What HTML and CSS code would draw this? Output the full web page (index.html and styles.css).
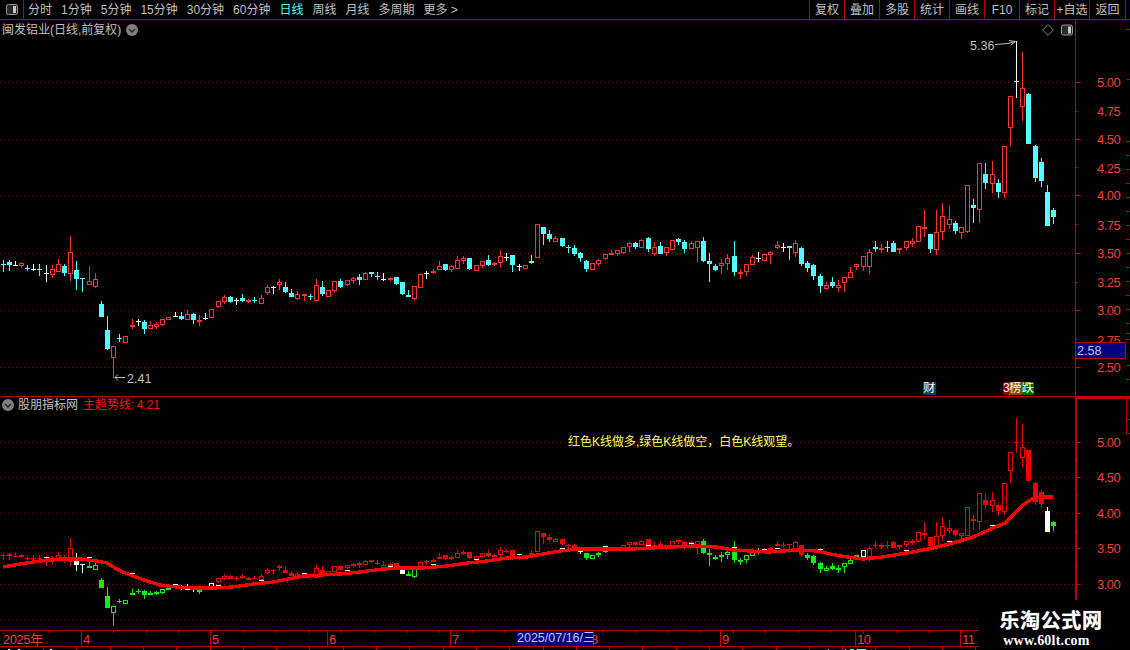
FILE: index.html
```html
<!DOCTYPE html>
<html lang="zh-CN">
<head>
<meta charset="utf-8">
<title>闽发铝业 K线</title>
<link rel="stylesheet" href="styles.css">
</head>
<body>
<div class="app">
  <header class="toolbar">
    <div class="panel-btn">
      <svg class="panel-icon" viewBox="0 0 12 11"><rect x="0.5" y="0.5" width="11" height="10" rx="2" class="pi-frame"/><rect x="7" y="2" width="3" height="7" class="pi-fill"/></svg>
    </div>
    <nav class="periods">
      <span>分时</span><span>1分钟</span><span>5分钟</span><span>15分钟</span><span>30分钟</span><span>60分钟</span><span class="active">日线</span><span>周线</span><span>月线</span><span>多周期</span><span>更多 &gt;</span>
    </nav>
    <nav class="actions">
      <span>复权</span><span>叠加</span><span>多股</span><span>统计</span><span>画线</span><span>F10</span><span>标记</span><span>+自选</span><span class="last">返回</span>
    </nav>
  </header>

  <section class="pane pane-main">
    <svg id="mainChart" class="chart" viewBox="0 20 1130 376"></svg>
    <div class="pane-head">
      <span class="title">闽发铝业(日线,前复权)</span>
      <svg class="chev" viewBox="0 0 12 12"><circle cx="6" cy="6" r="6" class="chev-bg"/><path d="M3 5l3 3 3-3" class="chev-mark"/></svg>
    </div>
    <div class="corner-icons">
      <svg class="diamond" viewBox="0 0 12 12"><path d="M6 .7L11.3 6 6 11.3.7 6z"/></svg>
      <svg class="panel-icon" viewBox="0 0 12 11"><rect x="0.5" y="0.5" width="11" height="10" rx="2" class="pi-frame"/><rect x="7" y="2" width="3" height="7" class="pi-fill"/></svg>
    </div>
    <div class="last-price">2.58</div>
    <div class="tags tag-fin"><span class="tag tag-blue">财</span></div>
    <div class="tags tag-rank"><span class="tag tag-red">3</span><span class="tag tag-brown">榜</span><span class="tag tag-green">跌</span></div>
  </section>

  <section class="pane pane-sub">
    <svg id="subChart" class="chart" viewBox="0 397 1130 233"></svg>
    <div class="pane-head sub-head">
      <svg class="chev" viewBox="0 0 12 12"><circle cx="6" cy="6" r="6" class="chev-bg"/><path d="M3 5l3 3 3-3" class="chev-mark"/></svg>
      <span class="title">股朋指标网</span>
      <span class="trend">主趋势线: 4.21</span>
    </div>
    <div class="hint">红色K线做多,绿色K线做空，白色K线观望。</div>
  </section>

  <footer class="timebar">
    <svg id="timeAxis" class="chart" viewBox="0 630 1130 20"></svg>
    <div class="cursor-date">2025/07/16/三</div>
  </footer>

  <div class="watermark">
    <div class="wm-name">乐淘公式网</div>
    <div class="wm-url">www.60lt.com</div>
  </div>
</div>
<script src="chart.js"></script>
</body>
</html>
```
FILE: styles.css
```css
* { box-sizing: border-box; }
html, body { margin: 0; padding: 0; background: #000; }
body {
  width: 1130px;
  height: 650px;
  overflow: hidden;
  font: 12px/1 "Liberation Sans", "Noto Sans CJK SC", sans-serif;
  color: #c0c0c0;
}
.app { position: relative; width: 1130px; height: 650px; display: flex; flex-direction: column; }

.toolbar { height: 20px; flex: none; display: flex; align-items: stretch; border-bottom: 1px solid #b40000; }
.panel-btn { width: 24px; display: flex; align-items: center; justify-content: center; border-right: 1px solid #b40000; }
.panel-icon { width: 12px; height: 11px; display: block; }
.pi-frame { fill: #2a2a2a; stroke: #999; }
.pi-fill { fill: #c8c8c8; }
.periods { display: flex; align-items: center; gap: 9px; padding-left: 4px; }
.periods .active { color: #54ffff; }
.actions { margin-left: auto; display: flex; padding-right: 4px; }
.actions span { width: 35px; display: flex; align-items: center; justify-content: center; border-left: 1px solid #b40000; }
.actions .last { width: 37px; border-right: 1px solid #b40000; }

.pane { position: relative; flex: none; }
.pane-main { height: 377px; border-bottom: 1px solid #c00000; }
.pane-sub { height: 233px; }
.chart { position: absolute; left: 0; top: 0; width: 1130px; height: 100%; display: block; shape-rendering: crispEdges; }

.pane-head { position: relative; display: flex; align-items: center; gap: 5px; height: 19px; padding-left: 2px; }
.chev { width: 12px; height: 12px; flex: none; }
.chev-bg { fill: #808080; shape-rendering: auto; }
.chev-mark { fill: none; stroke: #222; stroke-width: 1.4; shape-rendering: auto; }
.sub-head { height: 16px; gap: 4px; }
.trend { color: #ff1010; margin-left: 1px; word-spacing: -1px; }

.corner-icons { position: absolute; left: 1042px; top: 4px; display: flex; gap: 7px; }
.diamond { width: 12px; height: 12px; display: block; fill: none; stroke: #808080; shape-rendering: auto; }
.corner-icons .panel-icon { width: 12px; height: 12px; }

.last-price {
  position: absolute; left: 1075px; top: 322px; width: 51px; height: 17px;
  padding: 2px 0 0 1px; background: #000080; color: #c4c4e8;
  border: 1px solid #c00000; font-size: 12.5px;
}
.tags { position: absolute; top: 362px; display: flex; height: 13px; }
.tag-fin { left: 923px; }
.tag-rank { left: 1003px; }
.tag { display: block; color: #fff; line-height: 13px; text-align: center; width: 12.5px; overflow: hidden; }
.tag-blue { background: #0c3c70; }
.tag-red { background: #8a0000; width: 6px; }
.tag-brown { background: #8a4a00; }
.tag-green { background: #006a00; }

.hint { position: absolute; left: 568px; top: 39px; color: #ffff55; white-space: nowrap; }

.timebar { position: relative; height: 20px; flex: none; }
.cursor-date {
  position: absolute; left: 516px; top: 1px; width: 77px; height: 15px; padding-left: 1px;
  background: #000080; color: #c4c4e8; font-size: 12.5px; line-height: 15px; white-space: nowrap; overflow: hidden;
}

.watermark {
  position: absolute; left: 978px; top: 600px; width: 152px; height: 50px;
  background: #000; color: #fff; display: flex; flex-direction: column; align-items: center;
  padding: 9px 0 0 0;
}
.wm-name { font: 700 20px/22px "Noto Sans CJK SC", sans-serif; letter-spacing: .6px; margin-left: -6px; text-shadow: 0 0 1px #bbb; }
.wm-url { font: 700 14px/16px "Liberation Serif", serif; margin: 2px 0 0 -15px; letter-spacing: .2px; }

.axis-label { font: 13px "Liberation Sans", sans-serif; fill: #f03c3c; letter-spacing: -.5px; shape-rendering: auto; }
.note { font: 12.5px "Liberation Sans", sans-serif; fill: #c0c0c0; }
```
FILE: chart.js
```js
// [type, bodyTop, bodyBottom, high, low] in page pixels of the upper pane.
var K = [
['c',264,265,260,272],['c',262,265,260,271],['w',265,266,261,266],['r',263,266,262,268],['c',268,269,265,271],
['w',269,270,264,271],['c',269,270,264,276],['w',273,274,265,282],['r',269,275,265,278],['r',264,272,259,272],
['c',266,273,264,276],['r',252,274,236,281],['c',270,279,261,290],['c',278,279,278,292],['r',281,285,266,285],
['r',279,287,273,288],['c',304,317,301,317],['c',330,349,316,350],['r',346,358,346,378],['c',338,339,334,342],
['r',336,343,336,343],['r',325,326,319,329],['w',321,322,319,326],['c',322,329,320,334],['r',325,329,321,329],
['r',324,327,322,329],['r',319,325,319,326],['r',317,320,317,320],['w',316,317,312,317],['c',316,319,312,320],
['r',314,320,310,320],['c',314,320,313,324],['r',320,321,315,326],['w',318,319,313,320],['r',309,318,309,318],
['r',301,307,301,308],['r',297,302,295,304],['c',297,302,296,303],['w',300,301,298,305],['c',298,301,294,302],
['r',300,301,299,303],['c',300,301,297,303],['r',298,304,295,304],['r',287,293,285,295],['w',287,288,286,294],
['r',282,285,279,290],['c',287,292,282,293],['c',293,297,289,297],['r',294,299,291,300],['r',294,296,294,301],
['c',296,297,294,300],['r',285,301,279,301],['c',287,294,281,296],['r',290,297,290,297],['r',281,291,281,293],
['c',281,287,279,288],['r',280,285,280,286],['r',278,281,277,284],['c',277,280,274,285],['r',273,280,272,280],
['c',272,274,272,277],['c',276,277,272,280],['w',279,280,273,281],['r',278,280,277,281],['c',277,284,277,285],
['c',282,294,282,295],['c',295,297,290,297],['r',286,299,286,301],['r',274,288,273,288],['w',273,274,271,279],
['r',271,273,269,274],['r',266,270,261,270],['c',264,270,264,271],['r',266,270,265,272],['r',260,269,256,269],
['r',258,261,256,264],['c',258,269,258,270],['r',265,271,265,271],['r',261,266,261,268],['c',260,265,255,266],
['r',263,265,262,266],['r',256,263,250,268],['w',257,258,253,261],['c',255,265,255,272],['w',266,267,264,271],
['r',265,269,265,269],['c',261,263,255,264],['r',224,258,224,258],['c',227,234,227,245],['c',234,239,230,242],
['r',238,242,236,242],['c',238,246,238,247],['c',247,248,245,253],['c',248,254,245,256],['c',253,258,252,262],
['c',261,269,260,272],['r',263,270,263,270],['r',260,264,259,266],['r',254,259,254,260],['r',253,255,250,255],
['r',250,254,250,256],['r',247,253,247,254],['r',243,247,242,252],['c',243,247,242,249],['r',240,248,239,248],
['c',238,249,237,252],['r',247,254,242,256],['c',246,254,242,254],['r',247,253,247,256],['r',240,250,240,250],
['c',239,242,238,245],['c',242,249,240,253],['r',243,249,241,249],['r',241,248,241,262],['c',241,261,237,262],
['c',261,264,253,282],['c',266,270,264,271],['r',263,266,259,274],['r',258,264,254,270],['c',256,272,241,276],
['r',272,273,269,279],['r',264,272,264,276],['r',257,265,255,265],['w',258,259,252,262],['r',254,261,253,261],
['r',252,255,251,264],['r',245,248,241,249],['w',247,248,243,252],['c',246,248,246,260],['r',243,253,240,257],
['c',248,264,247,266],['c',263,268,261,272],['c',265,276,264,280],['c',276,286,274,293],['r',285,289,282,290],
['c',282,286,277,288],['r',285,288,280,292],['r',277,283,277,292],['r',272,278,267,278],['r',264,267,264,270],
['r',256,267,256,271],['r',252,267,249,274],['c',247,249,241,252],['r',248,250,244,253],['c',247,248,241,252],
['c',243,252,241,252],['r',248,250,248,254],['r',241,248,241,250],['r',241,244,238,247],['r',226,242,226,242],
['r',227,229,210,237],['c',234,249,234,253],['r',232,250,210,255],['r',216,232,203,240],['r',219,225,206,229],
['c',223,231,221,234],['r',227,233,227,239],['r',185,232,185,233],['c',205,208,199,223],['r',163,210,163,223],
['c',174,183,163,189],['r',174,184,161,193],['c',183,192,179,198],['r',146,193,146,198],['r',96,128,96,146],
['w',81,82,41,98],['r',88,107,52,121],['c',94,144,93,144],['c',146,178,145,182],['c',162,181,158,187],
['c',192,226,185,226],['c',210,217,208,224]
];

var TREND = [[3,567],[20,564],[40,561],[60,559],[80,559],[97,561],[107,563],[115,568],[123,572],[133,576],
[147,581],[160,585],[177,587],[193,588],[213,588],[233,587],[253,584],[273,582],[298,577],[320,575],[340,574],
[360,572],[383,569],[403,568],[423,568],[447,566],[467,563],[487,561],[507,558],[527,557],[543,554],[560,551],
[577,549],[593,549],[613,549],[633,549],[650,548],[670,547],[697,546],[717,547],[733,550],[750,551],[767,552],
[783,551],[800,550],[817,551],[830,554],[847,557],[863,559],[883,557],[900,554],[913,552],[933,548],[953,543],
[973,537],[993,528],[1005,523],[1013,515],[1023,505],[1032,499],[1040,497],[1053,497]];

var GREEN = [[14,29],[32,32],[66,67],[95,98],[114,123],[131,139],[171,171]];
var WHITE = [12,13,30,31,33,34,65,94,99,124,140,170];

var NS = 'http://www.w3.org/2000/svg';
var COL = { r:'#ff3232', c:'#54ffff', w:'#ffffff' };
var GRID = '#8c0000', AXIS = '#c00000';

function el(parent, tag, attrs, text) {
  var n = document.createElementNS(NS, tag);
  for (var k in attrs) n.setAttribute(k, attrs[k]);
  if (text != null) n.textContent = text;
  parent.appendChild(n);
  return n;
}
function rect(p, x, y, w, h, fill) { return el(p, 'rect', { x:x, y:y, width:w, height:h, fill:fill }); }
function xOf(i) { return 3 + Math.floor(i * 43 / 7 + 1e-9); }

function candle(p, i, top, bot, hi, lo, color, hollow) {
  var X = xOf(i);
  rect(p, X, hi, 1, Math.max(lo - hi, 1), color);
  var h = Math.max(bot - top, 1);
  if (hollow) {
    el(p, 'rect', { x:X-1.5, y:top+.5, width:4, height:Math.max(h-1,1), fill:'#000', stroke:color });
  } else {
    rect(p, X-2, top, 5, h, color);
  }
}

function grid(svg, ys) {
  ys.forEach(function (y) {
    el(svg, 'line', { x1:0, y1:y+.5, x2:1075, y2:y+.5, stroke:GRID, 'stroke-dasharray':'1 3' });
  });
}
function axis(svg, top, bottom, labels) {
  rect(svg, 1075, top, 1, bottom - top, AXIS);
  labels.forEach(function (l, idx) {
    rect(svg, 1075, l[1], 6, 1, AXIS);
    if (idx < labels.length - 1) rect(svg, 1075, Math.round((l[1] + labels[idx+1][1]) / 2), 3, 1, AXIS);
    el(svg, 'text', { x:1097, y:l[1]+4.5, 'class':'axis-label' }, l[0]);
  });
}
function rightRail(svg, ys) {
  ys.forEach(function (y) { rect(svg, 1126, y, 4, 1, AXIS); });
}

/* upper pane */
var main = document.getElementById('mainChart');
grid(main, [82,139,195,253,310,367]);
axis(main, 20, 396, [['5.00',82],['4.50',139],['4.00',195],['3.50',253],['3.00',310],['2.50',367]]);
[['4.75',116],['4.25',173],['3.75',230],['3.25',287],['2.75',345]].forEach(function (m) {
  el(main, 'text', { x:1097, y:m[1], 'class':'axis-label' }, m[0]);
});
rightRail(main, [29,79,141,155,169,183,197,211,225,239,253,267,281,295,309,323,333,339,365,379]);
K.forEach(function (k, i) { candle(main, i, k[1], k[2], k[3], k[4], COL[k[0]], k[0] === 'r'); });
el(main, 'text', { x:970, y:50, 'class':'note' }, '5.36');
el(main, 'path', { d:'M995 44.5L1008 43.5L1015 41.5M1009 40.5L1015.5 41.5L1011 45', fill:'none', stroke:'#c0c0c0', style:'shape-rendering:auto' });
el(main, 'text', { x:127, y:383, 'class':'note' }, '2.41');
el(main, 'path', { d:'M125 377.5L115 377.5M118 374.5L115 377.5L118 380.5', fill:'none', stroke:'#c0c0c0', style:'shape-rendering:auto' });

/* lower pane */
var sub = document.getElementById('subChart');
grid(sub, [442,477,513,548,584,619]);
axis(sub, 397, 630, [['5.00',442],['4.50',477],['4.00',513],['3.50',548],['3.00',584]]);
rect(sub, 1076, 397, 1, 233, AXIS);
rect(sub, 1075, 397, 55, 2, AXIS);
rect(sub, 1126, 397, 1, 38, AXIS);
rightRail(sub, [419,433]);

function bottomColor(i) {
  if (WHITE.indexOf(i) >= 0) return '#ffffff';
  for (var n = 0; n < GREEN.length; n++) if (i >= GREEN[n][0] && i <= GREEN[n][1]) return '#12ee12';
  return '#f00000';
}
function toSub(y) { return Math.round(443 + (y - 82) * 0.6173); }
K.forEach(function (k, i) {
  candle(sub, i, toSub(k[1]), toSub(k[2]), toSub(k[3]), toSub(k[4]), bottomColor(i), k[0] === 'r');
});
function trendAt(x) {
  for (var n = 1; n < TREND.length; n++) {
    if (x <= TREND[n][0]) {
      var a = TREND[n-1], b = TREND[n];
      return a[1] + (b[1] - a[1]) * (x - a[0]) / (b[0] - a[0]);
    }
  }
  return TREND[TREND.length-1][1];
}
el(sub, 'polyline', {
  points: TREND.map(function (p) { return p.join(','); }).join(' '),
  fill:'none', stroke:'#ff0000', 'stroke-width':3.4
});
K.forEach(function (k, i) {
  if (i % 7 === 0 && i > 0 && i < 165) rect(sub, xOf(i) - 2, Math.round(trendAt(xOf(i))) - 3, 5, 1, '#ffffff');
});

/* time axis */
var tAxis = document.getElementById('timeAxis');
rect(tAxis, 0, 630, 978, 1, AXIS);
rect(tAxis, 0, 646, 978, 1, AXIS);
[[3,'2025年',0],[83,'4',81],[212,'5',210],[329,'6',327],[452,'7',450],[591,'8',593],[722,'9',720],[857,'10',855],[962,'11',960]].forEach(function (t) {
  if (t[2]) rect(tAxis, t[2], 630, 1, 17, AXIS);
  el(tAxis, 'text', { x:t[0], y:644, 'class':'axis-label' }, t[1]);
});
for (var tx = 48; tx < 978; tx += 32.6) rect(tAxis, Math.round(tx), 631, 1, 2, AXIS);
for (var bx = 43; bx < 978; bx += 33.3) rect(tAxis, Math.round(bx), 647, 1, 3, AXIS);
[[8,2],[18,2],[50,2],[828,1],[845,1]].forEach(function (s) { rect(tAxis, s[0], 649, s[1], 1, '#ffffff'); });
rect(tAxis, 850, 649, 4, 1, '#54ffff');
rect(tAxis, 857, 649, 9, 1, '#54ffff');
```
